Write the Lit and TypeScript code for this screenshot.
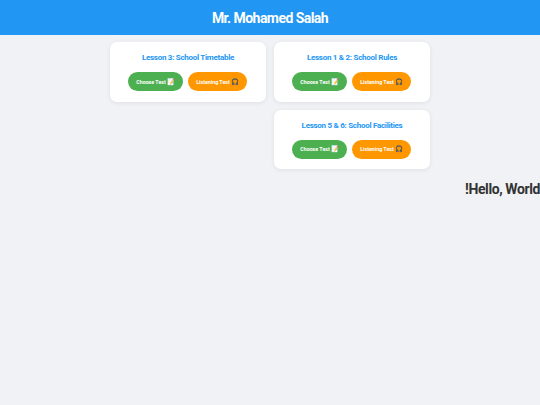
import { LitElement, html, css } from "lit";
import { customElement } from "lit/decorators.js";

const lessons = ["Lesson 1 & 2: School Rules", "Lesson 3: School Timetable", "Lesson 5 & 6: School Facilities"];

@customElement("app-root")
export class AppRoot extends LitElement {
  static styles = css`
    :host {
      display: block;
      min-height: 405px;
      background: #f0f2f5;
      font-family: "Roboto", "Noto Sans", sans-serif;
      direction: rtl;
      overflow: hidden;
    }
    header {
      height: 35px;
      background: #2196f3;
      color: #fff;
      display: flex;
      align-items: center;
      justify-content: center;
      font-size: 14px;
      font-weight: 700;
      letter-spacing: -0.55px;
    }
    .grid {
      display: flex;
      flex-wrap: wrap;
      justify-content: flex-start;
      gap: 8px;
      padding: 7px 0 0;
      width: 320px;
      margin: 0 auto;
    }
    .card {
      width: 156px;
      height: 59.5px;
      box-sizing: border-box;
      background: #fff;
      border-radius: 7px;
      box-shadow: 0 1px 5px rgba(0, 0, 0, 0.08);
      padding: 10px 0 0;
      display: flex;
      flex-direction: column;
      align-items: center;
      gap: 8px;
    }
    .title {
      font-size: 8px;
      line-height: 12px;
      font-weight: 700;
      color: #2196f3;
      direction: ltr;
      letter-spacing: -0.28px;
    }
    .btns {
      display: flex;
      gap: 5px;
      padding-right: 0.5px;
    }
    .btn {
      height: 19px;
      border-radius: 10px;
      color: #fff;
      font-size: 5.3px;
      font-weight: 700;
      display: flex;
      align-items: center;
      justify-content: center;
      direction: ltr;
      gap: 1.5px;
    }
    .emoji { font-size: 6.5px; }
    .green { width: 55px; background: #4caf50; }
    .orange { width: 59px; background: #ff9800; }
    .hello {
      margin: 10px 0 0;
      font-size: 14px;
      line-height: 20px;
      font-weight: 700;
      color: #333;
      text-align: right;
      letter-spacing: -0.4px;
    }
  `;

  render() {
    return html`
      <header>Mr. Mohamed Salah</header>
      <div class="grid">
        ${lessons.map(
          (l) => html`<div class="card">
            <div class="title">${l}</div>
            <div class="btns">
              <div class="btn orange">Listening Test <span class="emoji">🎧</span></div>
              <div class="btn green">Choose Test <span class="emoji">📝</span></div>
            </div>
          </div>`
        )}
      </div>
      <div class="hello">Hello, World!</div>
    `;
  }
}
